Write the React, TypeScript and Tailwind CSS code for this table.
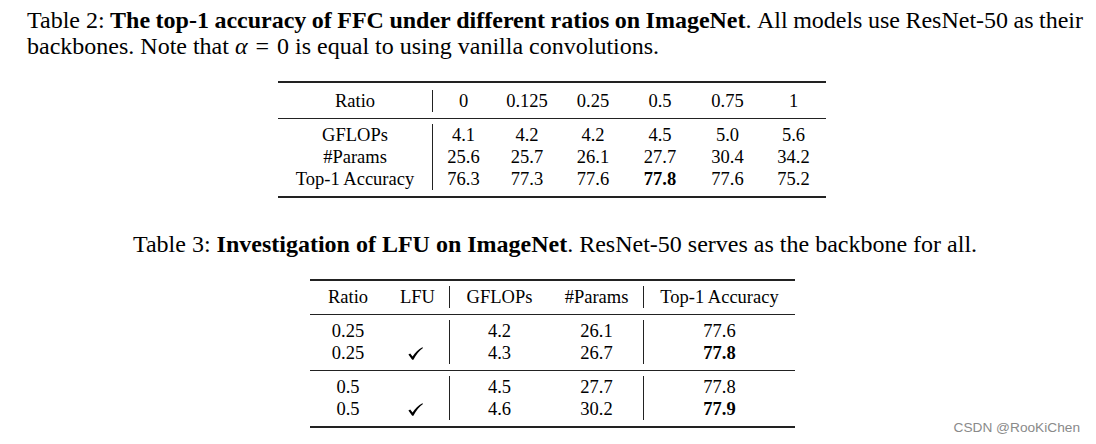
import React from "react";

const serif = { fontFamily: '"Liberation Serif", "Times New Roman", serif' };

function Col({ w, sep, children }: { w: string; sep?: boolean; children: React.ReactNode }) {
  return (
    <div className={`${w} flex flex-col items-center ${sep ? "border-l border-[#222]" : ""}`}>{children}</div>
  );
}

function Cell({ children, bold }: { children?: React.ReactNode; bold?: boolean }) {
  return (
    <div className={`h-[22px] leading-[22px] whitespace-nowrap flex items-center ${bold ? "font-bold" : ""}`}>
      {children}
    </div>
  );
}

const t2Widths = ["w-[154px]", "w-[62px]", "w-[66px]", "w-[66px]", "w-[68px]", "w-[67px]", "w-[65px]"];

function Check() {
  return (
    <svg width="15" height="13" viewBox="0 0 15 13" className="mr-[4px]">
      <path
        d="M0.4 7.6 L2.2 6.4 L4.6 9.6 C7 5.6 10.4 2.2 14.4 0.2 L15 0.9 C11.2 3.6 8 7.8 5.4 12.8 L4.2 12.8 Z"
        fill="#000"
      />
    </svg>
  );
}

export default function App() {
  const t2Body: (string | React.ReactNode)[][] = [
    ["GFLOPs", "#Params", "Top-1 Accuracy"],
    ["4.1", "25.6", "76.3"],
    ["4.2", "25.7", "77.3"],
    ["4.2", "26.1", "77.6"],
    ["4.5", "27.7", <b key="b">77.8</b>],
    ["5.0", "30.4", "77.6"],
    ["5.6", "34.2", "75.2"],
  ];
  const t2Head = ["Ratio", "0", "0.125", "0.25", "0.5", "0.75", "1"];

  const t3Groups = [
    [
      ["0.25", "", "4.2", "26.1", "77.6", false],
      ["0.25", "c", "4.3", "26.7", "77.8", true],
    ],
    [
      ["0.5", "", "4.5", "27.7", "77.8", false],
      ["0.5", "c", "4.6", "30.2", "77.9", true],
    ],
  ] as const;

  return (
    <div className="relative w-[1096px] h-[444px] bg-white text-black overflow-hidden" style={serif}>
      <div className="ml-[27px] w-[1056px] pt-[7px]">
        {/* Table 2 caption */}
        <div className="text-[24px] leading-[26px]">
          <div className="whitespace-nowrap flex justify-between">
            <span>Table 2:</span>
            <b>The</b><b>top-1</b><b>accuracy</b><b>of</b><b>FFC</b><b>under</b><b>different</b><b>ratios</b><b>on</b>
            <span><b>ImageNet</b>.</span>
            <span>All</span><span>models</span><span>use</span><span>ResNet-50</span><span>as</span><span>their</span>
          </div>
          <div className="whitespace-nowrap">
            backbones. Note that <i>α</i> <span className="mx-[2px]">=</span> 0 is equal to using vanilla convolutions.
          </div>
        </div>

        {/* Table 2 */}
        <div className="ml-[251px] w-[548px] mt-[22px] text-[18.5px]">
          <div className="h-[2px] bg-[#222]" />
          <div className="flex pt-[7px] pb-[6px]">
            {t2Head.map((h, i) => (
              <Col key={i} w={t2Widths[i]} sep={i === 1}>
                <Cell>{h}</Cell>
              </Col>
            ))}
          </div>
          <div className="h-px bg-[#222]" />
          <div className="flex pt-[5px] pb-[6px]">
            {t2Body.map((col, i) => (
              <Col key={i} w={t2Widths[i]} sep={i === 1}>
                {col.map((v, j) => (
                  <Cell key={j}>{v}</Cell>
                ))}
              </Col>
            ))}
          </div>
          <div className="h-[2px] bg-[#222]" />
        </div>

        {/* Table 3 caption */}
        <div className="mt-[33px] text-[24px] leading-[26px] text-center">
          Table 3: <b>Investigation of LFU on ImageNet</b>. ResNet-50 serves as the backbone for all.
        </div>

        {/* Table 3 */}
        <div className="ml-[283px] w-[485px] mt-[22px] text-[18.5px]">
          <div className="h-[2px] bg-[#222]" />
          <div className="flex pt-[5px] pb-[6px]">
            <Col w="w-[76px]"><Cell>Ratio</Cell></Col>
            <Col w="w-[63px]"><Cell>LFU</Cell></Col>
            <Col w="w-[194px]" sep>
              <div className="flex">
                <div className="w-[100px] flex justify-center"><Cell>GFLOPs</Cell></div>
                <div className="w-[94px] flex justify-center"><Cell>#Params</Cell></div>
              </div>
            </Col>
            <Col w="w-[152px]" sep><Cell>Top-1 Accuracy</Cell></Col>
          </div>
          {t3Groups.map((g, gi) => (
            <React.Fragment key={gi}>
              <div className="h-px bg-[#222]" />
              <div className="flex pt-[5px] pb-[6px]">
                <Col w="w-[76px]">{g.map((r, j) => <Cell key={j}>{r[0]}</Cell>)}</Col>
                <Col w="w-[63px]">{g.map((r, j) => <Cell key={j}>{r[1] ? <Check /> : ""}</Cell>)}</Col>
                <Col w="w-[194px]" sep>
                  <div className="flex">
                    <div className="w-[100px] flex flex-col items-center">{g.map((r, j) => <Cell key={j}>{r[2]}</Cell>)}</div>
                    <div className="w-[94px] flex flex-col items-center">{g.map((r, j) => <Cell key={j}>{r[3]}</Cell>)}</div>
                  </div>
                </Col>
                <Col w="w-[152px]" sep>{g.map((r, j) => <Cell key={j} bold={r[5]}>{r[4]}</Cell>)}</Col>
              </div>
            </React.Fragment>
          ))}
          <div className="h-[2px] bg-[#222]" />
        </div>
      </div>

      <div
        className="absolute right-[16px] bottom-[5px] text-[13.7px] text-[#8a8a8a]"
        style={{ fontFamily: '"Liberation Sans", Arial, sans-serif' }}
      >
        CSDN @RooKiChen
      </div>
    </div>
  );
}
